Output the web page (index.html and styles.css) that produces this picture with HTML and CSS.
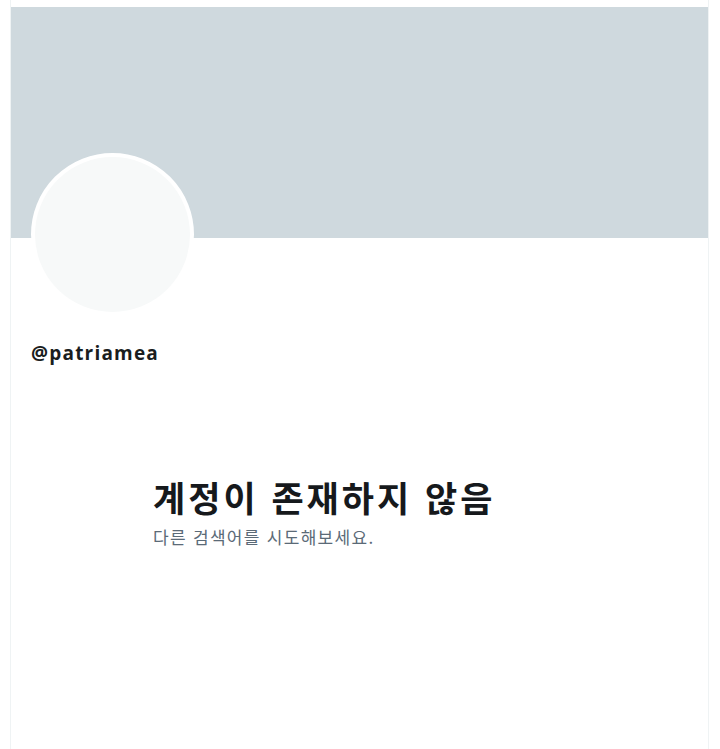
FILE: index.html
```html
<!DOCTYPE html>
<html lang="ko">
<head>
    <meta charset="UTF-8">
    <meta name="viewport" content="width=device-width, initial-scale=1.0">
    <title>@patriamea</title>
    <link rel="stylesheet" href="styles.css">
</head>
<body>
    <div class="page">
        <div class="banner"></div>
        <div class="profile">
            <div class="avatar"></div>
            <p class="handle">@patriamea</p>
        </div>
        <div class="empty">
            <h2 class="empty-title">계정이 존재하지 않음</h2>
            <p class="empty-sub">다른 검색어를 시도해보세요.</p>
        </div>
    </div>
</body>
</html>
```

FILE: styles.css
```css
*{
    margin: 0;
    padding: 0;
    box-sizing: border-box;
}
body{
    background: #ffffff;
    font-family: "Open Sans", "Noto Sans CJK KR", sans-serif;
    color: #0f1419;
}
.page{
    margin-left: 10px;
    width: 699px;
    min-height: 100vh;
    padding-top: 7px;
    border-left: 1px solid #eff3f4;
    border-right: 1px solid #eff3f4;
}
.banner{
    height: 231px;
    background: #cfd9de;
}
.profile{
    padding: 0 20px;
}
.avatar{
    width: 163px;
    height: 163px;
    margin-top: -85px;
    border-radius: 50%;
    background: #f7f9f9;
    border: 4px solid #ffffff;
}
.handle{
    margin-top: 24px;
    font-size: 19px;
    line-height: 26px;
    font-weight: 700;
    letter-spacing: 1.2px;
    color: #1a1d20;
}
.empty{
    padding: 110px 0 0 142px;
}
.empty-title{
    font-family: "Noto Sans CJK KR", sans-serif;
    font-size: 35px;
    line-height: 42px;
    font-weight: 700;
    letter-spacing: 3px;
    color: #16191c;
}
.empty-sub{
    margin-top: 8px;
    font-family: "Noto Sans CJK KR", sans-serif;
    font-size: 17px;
    line-height: 22px;
    letter-spacing: 1.3px;
    color: #5b6a77;
}
```
